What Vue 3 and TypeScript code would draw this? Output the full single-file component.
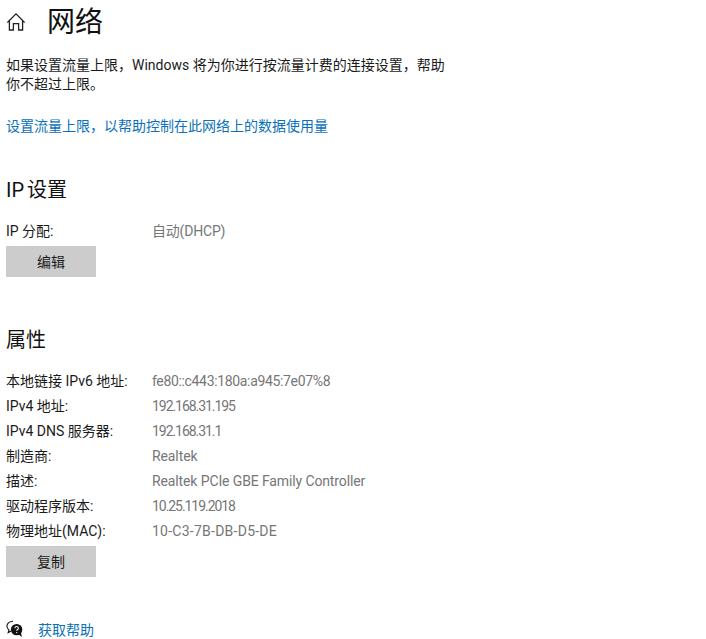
<script setup lang="ts">
const ipRows = [{ label: 'IP 分配:', value: '自动(DHCP)', spacing: -0.2 }]

// spacing: the reference's digits run narrower than Roboto's
const propRows = [
  { label: '本地链接 IPv6 地址:', value: 'fe80::c443:180a:a945:7e07%8', spacing: -0.34 },
  { label: 'IPv4 地址:', value: '192.168.31.195', spacing: -1.05 },
  { label: 'IPv4 DNS 服务器:', value: '192.168.31.1', spacing: -1.05 },
  { label: '制造商:', value: 'Realtek', spacing: -0.1 },
  { label: '描述:', value: 'Realtek PCIe GBE Family Controller', spacing: -0.12 },
  { label: '驱动程序版本:', value: '10.25.119.2018', spacing: -1.05 },
  { label: '物理地址(MAC):', value: '10-C3-7B-DB-D5-DE', spacing: 0.25 },
]
</script>

<template>
  <div class="page">
    <header class="head">
      <svg class="home" viewBox="0 0 18 18" width="18" height="18" fill="none" stroke="#222" stroke-width="1.3">
        <path d="M.4 9.6 9 .9l8.6 8.7" />
        <path d="M2.4 7.6V17H6.4V10.6H11.6V17H15.6V7.6" />
      </svg>
      <h1>网络</h1>
    </header>

    <p class="intro">如果设置流量上限，Windows 将为你进行按流量计费的连接设置，帮助你不超过上限。</p>
    <a class="link limit">设置流量上限，以帮助控制在此网络上的数据使用量</a>

    <h2 class="ip-title">IP 设置</h2>
    <div v-for="row in ipRows" :key="row.label" class="row">
      <span class="label">{{ row.label }}</span>
      <span class="value" :style="{ letterSpacing: row.spacing + 'px' }">{{ row.value }}</span>
    </div>
    <button class="btn">编辑</button>

    <h2 class="prop-title">属性</h2>
    <div class="props">
      <div v-for="row in propRows" :key="row.label" class="row">
        <span class="label">{{ row.label }}</span>
        <span class="value" :style="{ letterSpacing: row.spacing + 'px' }">{{ row.value }}</span>
      </div>
    </div>
    <button class="btn">复制</button>

    <div class="help">
      <svg class="help-icon" viewBox="0 0 18 18" width="18" height="18">
        <path d="M7 1.2C3.6 1.2.9 3.3.9 6.1c0 1.6.8 3 2.1 3.9L2.2 12.6l2.9-1.6" fill="none" stroke="#111" stroke-width="1.1" />
        <circle cx="10.6" cy="9.6" r="5.7" fill="#111" />
        <path d="M12.4 14.2 15.8 17 15 12.4Z" fill="#111" />
        <path d="M8.9 8.2c0-2.2 3.5-2.2 3.5 0 0 1.4-1.7 1.3-1.7 2.6" fill="none" stroke="#fff" stroke-width="1.1" />
        <circle cx="10.7" cy="12.6" r=".7" fill="#fff" />
      </svg>
      <a class="link">获取帮助</a>
    </div>
  </div>
</template>

<style scoped>
.page {
  width: 706px;
  height: 639px;
  overflow: hidden;
  box-sizing: border-box;
  padding: 1px 0 0 6px;
  background: #fff;
  color: #1a1a1a;
  font-family: Roboto, "Noto Sans CJK SC", sans-serif;
  font-size: 14px;
}
.head {
  display: flex;
  align-items: center;
  height: 42px;
}
.home {
  margin: 0 0 0 1px;
}
h1 {
  margin: 0 0 0 22px;
  padding-top: 2px;
  font-size: 28px;
  font-weight: 400;
  line-height: 42px;
  color: #111;
}
.intro {
  width: 442px;
  margin: 13px 0 0;
  line-height: 19px;
}
.link {
  color: #0a71b8;
  display: block;
}
.limit {
  margin-top: 22px;
  line-height: 20px;
}
h2 {
  margin: 0;
  font-size: 20px;
  font-weight: 400;
  line-height: 28px;
  color: #111;
}
.ip-title {
  margin-top: 40px;
  word-spacing: -2px;
}
.row {
  display: flex;
  height: 25px;
  line-height: 25px;
}
.ip-title + .row {
  margin-top: 15px;
}
.label {
  width: 146px;
  flex: none;
}
.value {
  color: #767676;
}
.btn {
  display: block;
  width: 90px;
  height: 31px;
  margin-top: 2px;
  padding: 0 0 2px;
  border: 0;
  background: #ccc;
  color: #1a1a1a;
  font: inherit;
}
.prop-title {
  margin-top: 49px;
}
.props {
  margin-top: 15px;
}
.help {
  display: flex;
  align-items: center;
  margin-top: 42px;
}
.help-icon {
  flex: none;
}
.help .link {
  margin-left: 14px;
}
</style>

<style>
html,
body {
  margin: 0;
  background: #fff;
}
</style>
